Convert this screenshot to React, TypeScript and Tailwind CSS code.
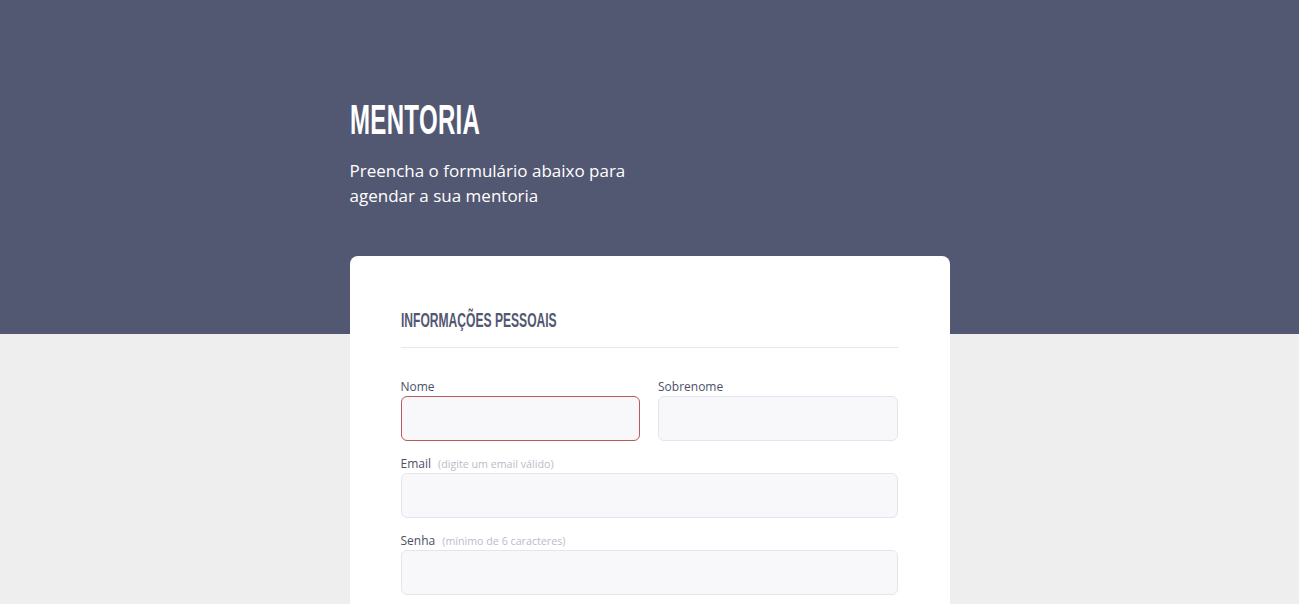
import React from 'react'

const sans = { fontFamily: '"Open Sans", Lato, sans-serif' }
const condensed = { fontFamily: '"Liberation Sans", Arial, sans-serif' }

function Field({ label, hint, error }: { label: string; hint?: string; error?: boolean }) {
  return (
    <div className="flex flex-col">
      <label className="text-[12px] leading-[16px] text-[#4b5068] mb-[1px]">
        {label}
        {hint && <span className="ml-[7px] text-[10.7px] text-[#b9bccb]">({hint})</span>}
      </label>
      <input
        className={
          'h-[45px] w-full rounded-[6px] bg-[#f8f8fb] border outline-none ' +
          (error ? 'border-[#b65a5a]' : 'border-[#e4e4ee]')
        }
      />
    </div>
  )
}

export default function App() {
  return (
    <div className="min-h-screen bg-[#eeeeee]" style={sans}>
      <header className="bg-[#535872] h-[334px]">
        <div className="mx-auto w-[600px] pt-[98px]">
          <h1
            className="inline-block origin-left scale-x-[0.56] text-[43px] leading-[42px] font-bold text-white tracking-[0.5px]"
            style={condensed}
          >
            MENTORIA
          </h1>
          <p className="mt-[18px] w-[300px] text-[17px] leading-[25px] text-white">
            Preencha o formulário abaixo para agendar a sua mentoria
          </p>
        </div>
      </header>
      <main className="mx-auto w-[600px] -mt-[78px]">
        <section className="bg-white rounded-[8px] pl-[51px] pr-[52px] pt-[52px] pb-[40px]">
          <h2
            className="inline-block origin-left scale-x-[0.575] text-[21px] leading-[24px] font-bold text-[#535872]"
            style={condensed}
          >
            INFORMAÇÕES PESSOAIS
          </h2>
          <div className="mt-[14px] h-px bg-[#e6e6ef]" />
          <div className="mt-[31px] grid grid-cols-2 gap-x-[18px]">
            <Field label="Nome" error />
            <Field label="Sobrenome" />
          </div>
          <div className="mt-[15px]">
            <Field label="Email" hint="digite um email válido" />
          </div>
          <div className="mt-[15px]">
            <Field label="Senha" hint="mínimo de 6 caracteres" />
          </div>
        </section>
      </main>
    </div>
  )
}
